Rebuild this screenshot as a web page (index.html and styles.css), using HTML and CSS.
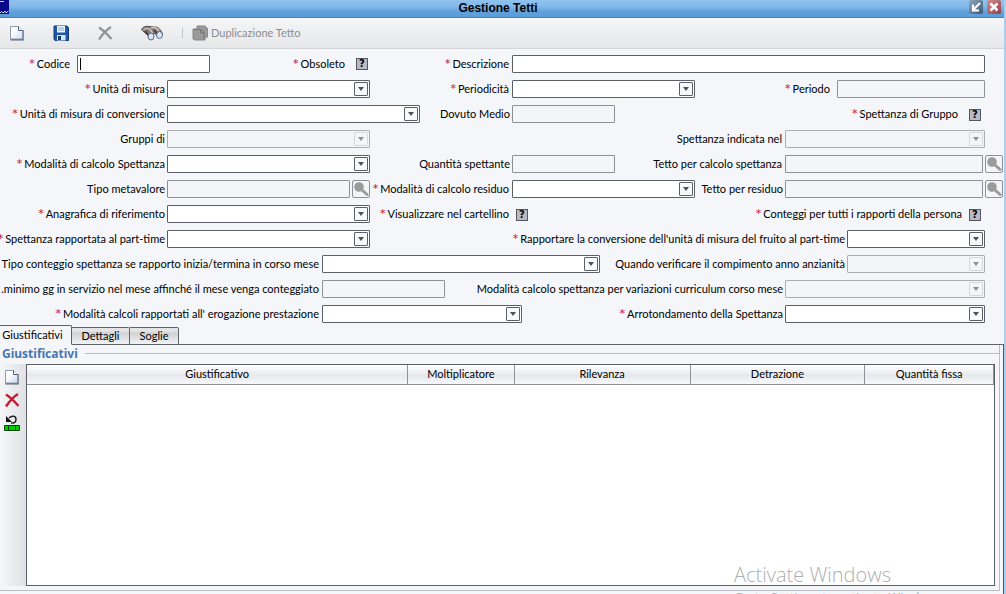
FILE: index.html
```html
<!DOCTYPE html>
<html lang="it">
<head>
<meta charset="utf-8">
<title>Gestione Tetti</title>
<link rel="stylesheet" href="styles.css">
</head>
<body>
<svg class="defs" aria-hidden="true">
  <defs>
    <linearGradient id="paper" x1="0" y1="0" x2="1" y2="1"><stop offset="0.300" stop-color="#fff"/><stop offset="1" stop-color="#cfdcee"/></linearGradient>
    <symbol id="doc" viewBox="0 0 16 16"><path d="M1.500 14.800h12.500V5" fill="none" stroke="#5d6573" stroke-width="1.400"/><path d="M1.500 1.500h8l4 4v8.500h-12z" fill="url(#paper)" stroke="#8a9ab6"/><path d="M9.500 1.500v4h4" fill="#fff" stroke="#4f607f"/></symbol>
    <symbol id="lens" viewBox="0 0 16 16"><circle cx="6" cy="6" r="4.800" fill="#9b9b9b"/><path d="M9 9l5 4.500" stroke="#9b9b9b" stroke-width="3" stroke-linecap="round"/></symbol>
  </defs>
</svg>
<div class="window">
  <header class="titlebar">
    <svg class="app-icon" viewBox="0 0 9 15"><path d="M0 0h9v14H0z" fill="#08088a"/><path d="M0 1.500h4M0 13l1.500-1.500 1.500 1.500 2-2 1 2 2.500-2" stroke="#d5dcf4" fill="none"/></svg>
    <h1>Gestione Tetti</h1>
    <div class="win-buttons">
      <button class="win" aria-label="Ripristina"><svg viewBox="0 0 14 14"><path d="M11 3L5 9M4 4.500v6h6" fill="none" stroke="#fff" stroke-width="2.200"/></svg></button>
      <button class="win close" aria-label="Chiudi"><svg viewBox="0 0 14 14"><path d="M3.500 3.500l7 7M10.500 3.500l-7 7" stroke="#fff" stroke-width="2.600"/></svg></button>
    </div>
  </header>
  <div class="toolbar">
    <button aria-label="Nuovo"><svg class="i16" viewBox="0 0 16 16"><use href="#doc"/></svg></button>
    <button aria-label="Salva"><svg class="i16" viewBox="0 0 16 16"><path d="M1 1h13l1.500 1.500V15.500H2L1 14z" fill="#1d57a8" stroke="#123c7c"/><path d="M4 1h8v6.500H4z" fill="#eef5ff"/><path d="M5 3h6M5 5h6" stroke="#83a7d6"/><path d="M4 10h8.500v5.500H4z" fill="#d9e6f7"/><path d="M5 11h3v4H5z" fill="#163d7b"/></svg></button>
    <button aria-label="Elimina" disabled><svg class="i16" viewBox="0 0 16 16"><path d="M2 2.500C6 5 11 10 14.500 14M14 2C9 5 5 10 2 14.500" fill="none" stroke="#909294" stroke-width="2.200"/></svg></button>
    <button aria-label="Cerca"><svg class="glasses" viewBox="0 0 23 16"><path d="M.5 4.500C2 1.500 5 1 8 1.500l5 .5c3-.5 5 1 7 4l1.500 3-3 2.500-5-3-3 3-3-.5z" fill="#817974" stroke="#55514f"/><path d="M2.500 5c2-2 5-2 7 0l2 3M10 3c3-1 6 0 8 3" fill="none" stroke="#d3cac4" stroke-width="1.500"/><path d="M4 6l4 5M13 5l3 4" stroke="#3f3c3d" stroke-width="1.500"/><ellipse cx="10" cy="11.500" rx="3" ry="3.500" fill="#d5e7fb" stroke="#5b6679"/><ellipse cx="18.500" cy="10" rx="3" ry="3.500" fill="#d5e7fb" stroke="#5b6679"/></svg></button>
    <span class="sep"></span>
    <button class="dup" disabled><svg class="i16" viewBox="0 0 16 16"><path d="M5 1h8l3 3v8h-3v3H3l-2-1V4h4z" fill="#9a9a9a" stroke="#858585"/><path d="M2 4.500h7l3 3v7M8.500 5v3H12" fill="none" stroke="#757575"/></svg><span>Duplicazione Tetto</span></button>
  </div>
  <form class="form">
    <div class="row r1">
      <label class="req wide" for="codice">Codice</label><input id="codice" type="text">
      <label class="req far" for="obs">Obsoleto</label><input id="obs" type="checkbox">
      <label class="req mid" for="desc">Descrizione</label><input id="desc" type="text">
    </div>
    <div class="row r2">
      <label class="req" for="um">Unità di misura</label><span class="sel"><select id="um"></select></span>
      <label class="req mid" for="per">Periodicità</label><span class="sel"><select id="per"></select></span>
      <label class="req wide" for="periodo">Periodo</label><input id="periodo" type="text" disabled>
    </div>
    <div class="row r3">
      <label class="req" for="umc">Unità di misura di conversione</label><span class="sel"><select id="umc"></select></span>
      <label for="dov">Dovuto Medio</label><input id="dov" type="text" disabled>
      <label class="req far" for="sg">Spettanza di Gruppo</label><input id="sg" type="checkbox">
    </div>
    <div class="row r4">
      <label for="gr">Gruppi di</label><span class="sel off"><select id="gr" disabled></select></span>
      <label class="mid" for="si">Spettanza indicata nel</label><span class="sel off"><select id="si" disabled></select></span>
    </div>
    <div class="row r5">
      <label class="req" for="mcs">Modalità di calcolo Spettanza</label><span class="sel"><select id="mcs"></select></span>
      <label for="qs">Quantità spettante</label><input id="qs" type="text" disabled>
      <label class="mid" for="tcs">Tetto per calcolo spettanza</label><input id="tcs" class="with-find" type="text" disabled><button type="button" class="find" aria-label="Cerca tetto spettanza" disabled><svg class="i16" viewBox="0 0 16 16"><use href="#lens"/></svg></button>
    </div>
    <div class="row r6">
      <label for="tm">Tipo metavalore</label><input id="tm" class="with-find" type="text" disabled><button type="button" class="find" aria-label="Cerca metavalore" disabled><svg class="i16" viewBox="0 0 16 16"><use href="#lens"/></svg></button>
      <label class="req mid" for="mcr">Modalità di calcolo residuo</label><span class="sel"><select id="mcr"></select></span>
      <label for="tr">Tetto per residuo</label><input id="tr" class="with-find" type="text" disabled><button type="button" class="find" aria-label="Cerca tetto residuo" disabled><svg class="i16" viewBox="0 0 16 16"><use href="#lens"/></svg></button>
    </div>
    <div class="row r7">
      <label class="req" for="ar">Anagrafica di riferimento</label><span class="sel"><select id="ar"></select></span>
      <label class="req wide" for="vc">Visualizzare nel cartellino</label><input id="vc" type="checkbox">
      <label class="req wide" for="ct">Conteggi per tutti i rapporti della persona</label><input id="ct" type="checkbox">
    </div>
    <div class="row r8">
      <label class="req" for="sp">Spettanza rapportata al part-time</label><span class="sel"><select id="sp"></select></span>
      <label class="req" for="rc">Rapportare la conversione dell'unità di misura del fruito al part-time</label><span class="sel"><select id="rc"></select></span>
    </div>
    <div class="row r9">
      <label class="mid" for="tc">Tipo conteggio spettanza se rapporto inizia/termina in corso mese</label><span class="sel"><select id="tc"></select></span>
      <label for="qv">Quando verificare il compimento anno anzianità</label><span class="sel off"><select id="qv" disabled></select></span>
    </div>
    <div class="row r10">
      <label class="mid" for="mg">.minimo gg in servizio nel mese affinché il mese venga conteggiato</label><input id="mg" type="text" disabled>
      <label for="mv">Modalità calcolo spettanza per variazioni curriculum corso mese</label><span class="sel off"><select id="mv" disabled></select></span>
    </div>
    <div class="row r11">
      <label class="req mid" for="mc">Modalità calcoli rapportati all' erogazione prestazione</label><span class="sel"><select id="mc"></select></span>
      <label class="req" for="as">Arrotondamento della Spettanza</label><span class="sel"><select id="as"></select></span>
    </div>
  </form>
  <div class="tabs" role="tablist">
    <button class="tab active" role="tab" aria-selected="true">Giustificativi</button>
    <button class="tab" role="tab">Dettagli</button>
    <button class="tab" role="tab">Soglie</button>
  </div>
  <section class="panel">
    <div class="group">
      <h2>Giustificativi</h2>
      <div class="group-body">
        <div class="side">
          <button aria-label="Aggiungi"><svg class="i16" viewBox="0 0 16 16"><use href="#doc"/></svg></button>
          <button aria-label="Rimuovi"><svg class="i16" viewBox="0 0 16 16"><path d="M2 2.500C6 5 11 10 14.500 14M14 2C9 5 5 10 2 14.500" fill="none" stroke="#c41c31" stroke-width="2.400"/></svg></button>
          <button aria-label="Annulla riga"><svg class="i16" viewBox="0 0 16 16"><path d="M5 3c3-3 7-2 7 1.500C12 7 10 8.500 7 8" fill="none" stroke="#222" stroke-width="1.500"/><path d="M2 1v6h6z" fill="#111"/><path d="M.5 10.500h15v5H.5z" fill="#0c0" stroke="#064d06"/><path d="M4.500 10.500v5M11.500 10.500v5" stroke="#064d06"/></svg></button>
        </div>
        <div class="grid">
          <table>
            <colgroup><col class="c1"><col class="c2"><col class="c3"><col class="c4"><col class="c5"></colgroup>
            <thead><tr><th>Giustificativo</th><th>Moltiplicatore</th><th>Rilevanza</th><th>Detrazione</th><th>Quantità fissa</th></tr></thead>
          </table>
        </div>
      </div>
    </div>
  </section>
  <div class="watermark"><p class="w1">Activate Windows</p><p class="w2">Go to Settings to activate Windows.</p></div>
</div>
</body>
</html>
```
FILE: styles.css
```css
*, *::before, *::after { box-sizing: border-box; }
body {
  margin: 0;
  background: #f4f6f9;
  color: #000;
  font: 11px/18px Lato, Tahoma, sans-serif;
}
button, input, select { font: inherit; color: inherit; margin: 0; padding: 0; }
button { border: 0; background: none; display: flex; align-items: center; justify-content: center; }
svg { display: block; }
.defs { position: absolute; width: 0; height: 0; }
.i16 { width: 16px; height: 16px; flex: none; }

.window {
  position: relative;
  height: 100vh;
  overflow: hidden;
  display: flex;
  flex-direction: column;
  border-right: 2px solid #a9d0f0;
}

.titlebar {
  height: 18px;
  flex: none;
  display: grid;
  grid-template-columns: 40px 1fr 40px;
  margin-right: -2px;
  background: linear-gradient(#8fc3ee, #82b9e8 40%, #5f9fda 70%, #5b9ddb);
  border-bottom: 1px solid #4482bd;
}
.app-icon { width: 9px; height: 15px; }
h1 { margin: 0; font: bold 12px/16px "Liberation Sans", Arial, sans-serif; text-align: center; padding-right: 10px; }
.win-buttons { display: flex; gap: 4px; justify-content: flex-end; padding-right: 5px; }
.win { width: 14px; height: 14px; background: linear-gradient(135deg, #8fa5b8, #3a5878); border-radius: 2px; }
.win.close { background: linear-gradient(135deg, #d49090, #943b45); }
.win svg { width: 14px; height: 14px; }

.toolbar {
  height: 31px;
  flex: none;
  display: flex;
  align-items: center;
  padding-left: 9px;
  background: linear-gradient(#f5f6f8, #e6e7e9);
  border-bottom: 1px solid #d3d5d8;
}
.toolbar button { margin-right: 28px; }
.glasses { width: 23px; height: 16px; }
.toolbar button:nth-child(4) { margin-right: 18px; }
.sep { width: 1px; height: 10px; background: #c2c4c7; margin-right: 9px; }
.toolbar .dup { gap: 3px; margin: 0; color: #8c8d8f; }

.form { flex: none; display: grid; gap: 7px; padding: 6px 1px 0 0; }
.row { display: grid; height: 18px; }
.r1 { grid-template-columns: 77px 133px 146px 12px 144px 1fr 18px; }
.r2 { grid-template-columns: 167px 203px 142px 183px 142px 1fr 18px; }
.r3 { grid-template-columns: 167px 253px 92px 103px 1fr 12px 22px; }
.r4 { grid-template-columns: 167px 203px 415px 1fr 18px; }
.r5 { grid-template-columns: 167px 203px 142px 103px 170px 1fr 18px; }
.r6 { grid-template-columns: 167px 185px 18px 142px 183px 90px 1fr 18px; }
.r7 { grid-template-columns: 167px 203px 146px 12px 1fr 12px 22px; }
.r8 { grid-template-columns: 167px 203px 477px 1fr 18px; }
.r9 { grid-template-columns: 322px 278px 247px 1fr 18px; }
.r10 { grid-template-columns: 322px 123px 340px 1fr 18px; }
.r11 { grid-template-columns: 322px 200px 263px 1fr 18px; }

label { display: flex; justify-content: flex-end; white-space: nowrap; padding-right: 2px; min-width: 0; }
label.mid { padding-right: 3px; }
label.wide { padding-right: 7px; }
label.far { padding-right: 11px; }
label.req::before { content: "*"; color: #c8102e; margin-right: 2px; font-family: "DejaVu Sans", sans-serif; }

input[type="text"], select {
  appearance: none;
  width: 100%;
  height: 18px;
  min-width: 0;
  border: 1px solid #5c5f65;
  border-radius: 1px;
  background: #fff;
  padding: 0 3px;
}
input[type="text"]:disabled, select:disabled { border-color: #8e9197; background: #f3f5f8; }
input.with-find { width: calc(100% - 2px); }
#codice { background: linear-gradient(#000, #000) 2px 2px / 1px 12px no-repeat #fff; }

input[type="checkbox"] {
  appearance: none;
  width: 12px;
  height: 12px;
  align-self: center;
  border: 1px solid #55565f;
  background: #b9bac4;
  font: bold 10px/10px "DejaVu Sans", sans-serif;
  text-align: center;
}
input[type="checkbox"]::before { content: "?"; display: block; }

.sel { position: relative; display: block; min-width: 0; }
.sel::before {
  content: "";
  position: absolute;
  top: 2px;
  right: 2px;
  width: 14px;
  height: 14px;
  border: 1px solid #5c5f65;
  border-radius: 1px;
  background: #f7f8fa;
  pointer-events: none;
}
.sel::after {
  content: "";
  position: absolute;
  top: 7px;
  right: 6px;
  border: 3px solid transparent;
  border-top: 4px solid #4e5157;
  border-bottom: 0;
  pointer-events: none;
}
.sel.off::before { border-color: #8e9197; }
.sel.off::after { border-top-color: #8e9197; }
.find { width: 18px; height: 18px; border: 1px solid #8e9197; border-radius: 2px; background: #f4f5f7; }

.tabs { flex: none; display: flex; align-items: flex-end; height: 20px; margin-top: 2px; position: relative; z-index: 1; }
.tab {
  height: 18px;
  border: 1px solid #606368;
  border-left: 0;
  border-radius: 0 2px 0 0;
  background: linear-gradient(#e3e4e6 20%, #cfd1d4 30%, #f1f2f4);
}
.tab:nth-child(2) { width: 58px; }
.tab:nth-child(3) { width: 49px; }
.tab.active { width: 72px; height: 20px; background: #f4f6f9; border-bottom-color: #f4f6f9; padding: 0 6px 0 0; }

.panel {
  flex: 1;
  min-height: 0;
  margin-top: -1px;
  border-top: 1px solid #606368;
  border-right: 1px solid #50545b;
  padding: 0 3px 3px 0;
}
.group { height: 100%; display: flex; flex-direction: column; border-right: 1px solid #b9bcc1; border-bottom: 1px solid #b9bcc1; padding: 0 4px 4px 0; }
h2 { margin: 0 -4px 0 0; font: bold 12px/17px "Noto Sans", Tahoma, sans-serif; color: #4676b4; display: flex; align-items: center; gap: 7px; padding-left: 2px; }
h2::after { content: ""; flex: 1; height: 1px; background: #b9bcc1; }
.group-body { flex: 1; min-height: 0; display: flex; margin-top: 2px; }
.side { width: 26px; flex: none; display: flex; flex-direction: column; gap: 7px; padding: 5px 0 0 4px; background: linear-gradient(90deg, #f5f6f8, #e0e1e4); }
.side button { width: 16px; height: 16px; }
.grid { flex: 1; min-width: 0; border: 1px solid #5c5f65; background: #fff; }
table { width: 100%; table-layout: fixed; border-collapse: collapse; }
th {
  height: 19px;
  padding: 0;
  font-weight: normal;
  line-height: 18px;
  background: linear-gradient(#fff, #e6e8ec 55%, #f6f7f9);
  border-bottom: 1px solid #8e9197;
  border-right: 1px solid #8e9197;
}
.c1 { width: 39.400%; }
.c2 { width: 11%; }
.c3 { width: 18.200%; }
.c4 { width: 18.100%; }

.watermark { position: absolute; left: 734px; top: 562px; color: #adafb2; font-family: "Open Sans", "Noto Sans", sans-serif; white-space: nowrap; pointer-events: none; }
.watermark p { margin: 0; }
.w1 { font-size: 20px; line-height: 26px; font-weight: 300; }
.w2 { font-size: 13px; line-height: 18px; }
```
